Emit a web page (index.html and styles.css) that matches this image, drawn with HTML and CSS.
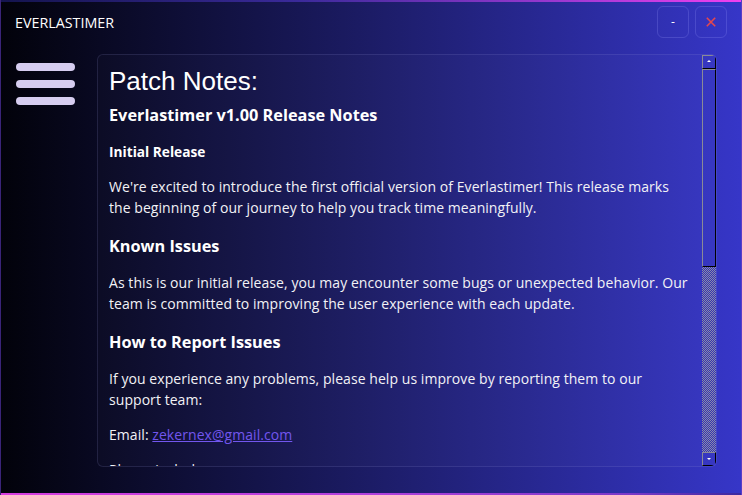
FILE: index.html
```html
<!DOCTYPE html>
<html lang="en">
<head>
<meta charset="utf-8">
<title>Everlastimer</title>
<link rel="stylesheet" href="styles.css">
</head>
<body>
<div class="window">
  <header class="titlebar">
    <span class="app-title">EVERLASTIMER</span>
    <div class="win-controls">
      <button class="win-btn min-btn" aria-label="Minimize">-</button>
      <button class="win-btn close-btn" aria-label="Close">
        <svg width="10" height="10" viewBox="0 0 10 10"><path d="M0.8 0.8 L9.2 9.2 M9.2 0.8 L0.8 9.2" stroke="#e5484d" stroke-width="1.6" fill="none"/></svg>
      </button>
    </div>
  </header>
  <div class="main">
    <button class="menu-btn" aria-label="Menu"><span></span><span></span><span></span></button>
    <section class="panel">
      <div class="notes">
        <h1>Patch Notes:</h1>
        <h2>Everlastimer v1.00 Release Notes</h2>
        <h4>Initial Release</h4>
        <p>We're excited to introduce the first official version of Everlastimer! This release marks the beginning of our journey to help you track time meaningfully.</p>
        <h3>Known Issues</h3>
        <p>As this is our initial release, you may encounter some bugs or unexpected behavior. Our team is committed to improving the user experience with each update.</p>
        <h3>How to Report Issues</h3>
        <p>If you experience any problems, please help us improve by reporting them to our support team:</p>
        <p>Email: <a href="#">zekernex@gmail.com</a></p>
        <p>Please include:</p>
      </div>
      <div class="scrollbar">
        <div class="sb-btn sb-up"></div>
        <div class="sb-thumb"></div>
        <div class="sb-track"></div>
        <div class="sb-btn sb-down"></div>
      </div>
    </section>
  </div>
</div>
</body>
</html>
```
FILE: styles.css
```css
html, body {
  margin: 0;
  padding: 0;
}
body {
  width: 742px;
  height: 495px;
  overflow: hidden;
  font-family: "Open Sans", "Noto Sans", sans-serif;
  color: #f2f2f6;
}
.window {
  box-sizing: border-box;
  width: 742px;
  height: 495px;
  display: flex;
  flex-direction: column;
  border-left: 1px solid #3a2478;
  border-right: 1px solid #5a3cc8;
  background:
    linear-gradient(to right, #14144e 0%, #3a2a9a 40%, #9a38d0 75%, #f040f0 100%) top / 100% 2px no-repeat,
    linear-gradient(to right, #d83ee0 0%, #b040dc 50%, #7a38c8 85%, #3a2aa0 100%) bottom / 100% 2px no-repeat,
    linear-gradient(to right, #02020a 0%, #1c1c66 50%, #3636c8 100%);
  padding: 2px 0 2px 0;
}
.titlebar {
  height: 40px;
  display: flex;
  align-items: center;
  justify-content: space-between;
  padding: 0 14px 0 14px;
}
.app-title {
  font-size: 14.3px;
  color: #ffffff;
}
.win-controls {
  display: flex;
  gap: 6px;
}
.win-btn {
  box-sizing: border-box;
  width: 32px;
  height: 32px;
  border: 1px solid rgba(160, 160, 255, 0.22);
  border-radius: 6px;
  background: transparent;
  display: flex;
  align-items: center;
  justify-content: center;
  padding: 0;
  font-family: "Open Sans", sans-serif;
  color: #ffffff;
}
.min-btn {
  font-size: 12px;
  line-height: 1;
}
.main {
  flex: 1;
  display: flex;
  align-items: flex-start;
  padding: 12px 0 26px 15px;
  min-height: 0;
}
.menu-btn {
  margin-top: 9px;
  width: 59px;
  padding: 0;
  border: 0;
  background: transparent;
  display: flex;
  flex-direction: column;
  gap: 9px;
}
.menu-btn span {
  display: block;
  height: 8px;
  border-radius: 4px;
  background: #d6cdf0;
}
.panel {
  box-sizing: border-box;
  margin-left: 22px;
  width: 620px;
  height: 413px;
  border: 1px solid rgba(150, 150, 220, 0.16);
  border-radius: 6px;
  background: rgba(255, 255, 255, 0.015);
  display: flex;
  overflow: hidden;
}
.notes {
  flex: 1;
  padding: 10px 13px 0 11px;
  overflow: hidden;
}
.notes h1 {
  font-family: "Liberation Sans", Arial, sans-serif;
  font-weight: normal;
  font-size: 26px;
  line-height: 32px;
  margin: 0 0 6px;
  color: #ffffff;
}
.notes h2 {
  font-size: 16.3px;
  line-height: 24px;
  font-weight: 700;
  margin: 0 0 14px;
  color: #ffffff;
}
.notes h3 {
  font-size: 16.3px;
  line-height: 24px;
  font-weight: 700;
  margin: 16px 0 14px;
  color: #ffffff;
}
.notes h4 {
  font-size: 13.7px;
  line-height: 21px;
  font-weight: 700;
  margin: 0 0 14px;
  color: #ffffff;
}
.notes p {
  font-size: 14px;
  line-height: 21px;
  letter-spacing: 0.06px;
  margin: 0 0 14px;
}
.notes a {
  color: #7256ee;
  text-decoration: underline;
}
.scrollbar {
  width: 14px;
  flex: none;
  display: flex;
  flex-direction: column;
}
.sb-btn, .sb-thumb {
  box-sizing: border-box;
  border-left: 1px solid #8a8a96;
  border-top: 1px solid #8a8a96;
  border-right: 1px solid #000;
  border-bottom: 1px solid #000;
  position: relative;
}
.sb-btn {
  height: 14px;
  flex: none;
}
.sb-thumb {
  height: 198px;
  flex: none;
}
.sb-track {
  flex: 1;
  background: repeating-conic-gradient(#8c8ca8 0 25%, #3434b4 0 50%) 0 0 / 2px 2px;
}
.sb-up::after, .sb-down::after {
  content: "";
  position: absolute;
  left: 4px;
  top: 4px;
  width: 0;
  height: 0;
  border-left: 2px solid transparent;
  border-right: 2px solid transparent;
}
.sb-up::after {
  border-bottom: 2px solid #ffffff;
}
.sb-down::after {
  top: 5px;
  border-top: 2px solid #ffffff;
}
```
